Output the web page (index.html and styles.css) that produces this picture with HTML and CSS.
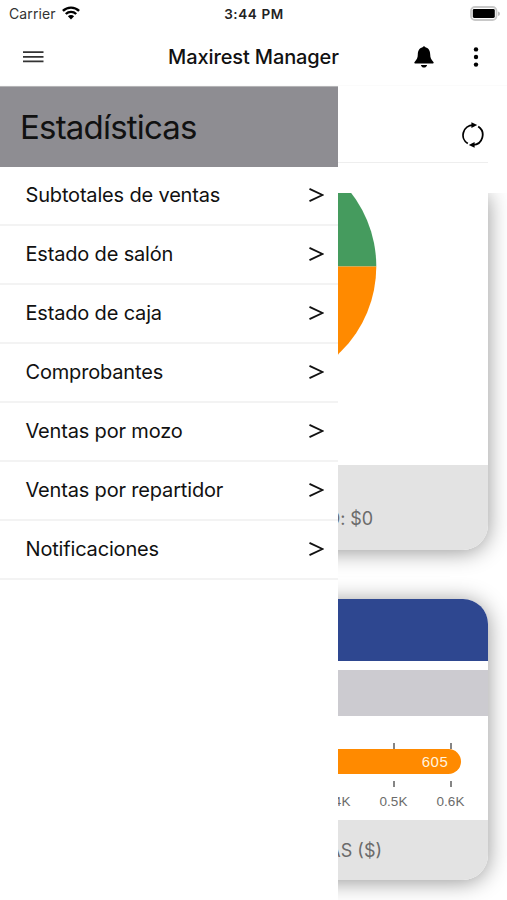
FILE: index.html
```html
<!DOCTYPE html>
<html lang="es">
<head>
<meta charset="utf-8">
<title>Maxirest Manager</title>
<link rel="stylesheet" href="styles.css">
</head>
<body>
<div class="status">
  <div class="carrier"><span>Carrier</span>
    <svg width="18" height="14" viewBox="0 0 18 14" fill="none" stroke="#000"><path d="M.9 4.9a11.6 11.6 0 0 1 16.2 0M3.8 8a7.4 7.4 0 0 1 10.4 0" stroke-width="2.4"/><path d="M9 13.4 5.9 10.3a4.4 4.4 0 0 1 6.2 0z" fill="#000" stroke="none"/></svg>
  </div>
  <div class="time">3:44 PM</div>
  <svg class="battery" width="30" height="16" viewBox="0 0 30 16"><rect x="1" y="1" width="25.5" height="13" rx="4" fill="#fff" stroke="#c8c8c8" stroke-width="1.8"/><rect x="2.8" y="3" width="22" height="9" rx="1.4"/><path d="M28 5.500q2 .5 2 2.300t-2 2.300z" fill="#bbb"/></svg>
</div>
<header class="navbar">
  <svg class="menu" width="21" height="12" viewBox="0 0 21 12" stroke="#333" stroke-width="1.8"><path d="M0 1.2h20.5M0 5.8h20.5M0 10.4h20.5"/></svg>
  <h1>Maxirest Manager</h1>
  <div class="actions">
    <svg width="20" height="22" viewBox="0 0 20 22"><path d="M8.6 1.200Q10-.6 11.400 1.200C15 2.100 16.100 5 16.200 8.500c.1 3.300.9 5 3 7.200.9 1 .5 1.900-.7 1.900H1.500c-1.200 0-1.600-.9-.7-1.900 2.100-2.200 2.900-3.900 3-7.200C3.900 5 5 2.100 8.600 1.200zM6.900 18.900h6.200c-.3 1.500-1.400 2.600-3.100 2.600s-2.800-1.100-3.100-2.600z"/></svg>
    <svg width="6" height="22" viewBox="0 0 6 22"><circle cx="3" cy="3.400" r="2.200"/><circle cx="3" cy="11" r="2.200"/><circle cx="3" cy="18.600" r="2.200"/></svg>
  </div>
</header>
<main>
  <nav class="drawer">
    <h2><span>Estadísticas</span></h2>
    <ul>
      <li><span>Subtotales de ventas</span><svg class="chev" viewBox="0 0 15 14"><path d="M.5.9 13.500 7 .5 13.100"/></svg></li>
      <li><span>Estado de salón</span><svg class="chev" viewBox="0 0 15 14"><path d="M.5.9 13.500 7 .5 13.100"/></svg></li>
      <li><span>Estado de caja</span><svg class="chev" viewBox="0 0 15 14"><path d="M.5.9 13.500 7 .5 13.100"/></svg></li>
      <li><span>Comprobantes</span><svg class="chev" viewBox="0 0 15 14"><path d="M.5.9 13.500 7 .5 13.100"/></svg></li>
      <li><span>Ventas por mozo</span><svg class="chev" viewBox="0 0 15 14"><path d="M.5.9 13.500 7 .5 13.100"/></svg></li>
      <li><span>Ventas por repartidor</span><svg class="chev" viewBox="0 0 15 14"><path d="M.5.9 13.500 7 .5 13.100"/></svg></li>
      <li><span>Notificaciones</span><svg class="chev" viewBox="0 0 15 14"><path d="M.5.9 13.500 7 .5 13.100"/></svg></li>
    </ul>
  </nav>
  <section class="content">
    <div class="toolbar">
      <svg width="24" height="26" viewBox="0 0 24 26" fill="none" stroke="#000" stroke-width="1.800"><path d="M6.800 21.600A10 10 0 0 1 12 3.100M17.200 4.600A10 10 0 0 1 12 22.900"/><path d="M10.400.2v5.800l5.800-2.900zM13.600 20v5.800l-5.800-2.900z" fill="#000" stroke="none"/></svg>
    </div>
    <div class="scroll">
      <article class="card first">
        <div class="pie"><svg width="150" height="272" viewBox="338 193 150 272"><path d="M256.300 266.500V146.500a120 120 0 0 1 120 120z" fill="#459b5e"/><path d="M256.300 266.500h120a120 120 0 0 1-120 120z" fill="#ff8a00"/></svg></div>
        <footer><span>TOTAL ESTIMADO: $0</span></footer>
      </article>
      <article class="card second">
        <div class="blue"></div>
        <div class="gray"></div>
        <div class="chart">
          <div class="ticks"><i></i><i></i></div>
          <div class="bar">605</div>
          <div class="ticks low"><i></i><i></i></div>
          <div class="labels"><span>0.4K</span><span>0.5K</span><span>0.6K</span></div>
        </div>
        <footer><span>VENTAS ($)</span></footer>
      </article>
    </div>
  </section>
</main>
</body>
</html>
```
FILE: styles.css
```css
* { box-sizing: border-box; margin: 0; padding: 0; }
body { width: 507px; height: 900px; overflow: hidden; background: #fff; color: #111; font-family: Inter, "Liberation Sans", sans-serif; }
svg { display: block; flex: none; }
span { white-space: nowrap; }
.status { display: grid; grid-template-columns: 1fr auto 1fr; height: 28px; padding: 0 7px 0 9px; align-items: center; }
.carrier { display: flex; align-items: center; gap: 6px; font-size: 14px; letter-spacing: .1px; color: #333; }
.carrier span { margin-top: -1px; }
.carrier svg { margin-top: -3px; }
.time { font-size: 13.500px; font-weight: 600; color: #222; letter-spacing: .6px; margin-right: 1px; }
.battery { justify-self: end; margin-top: -1px; }
.navbar { display: grid; grid-template-columns: 1fr auto 1fr; height: 58px; padding: 0 28px 0 23px; align-items: center; border-bottom: 1px solid #fbfbfb; }
h1 { font-size: 20px; font-weight: 500; letter-spacing: -.12px; margin: 1px -2.500px 0 2.500px; }
.menu { margin-top: 1px; }
.actions { display: flex; justify-content: flex-end; gap: 39px; }
main { display: flex; height: 814px; }
.drawer { width: 338px; flex: none; background: #fff; position: relative; z-index: 1; }
h2 { height: 80.500px; padding-left: 20px; background: #8e8d92; display: flex; align-items: center; font-size: 33px; font-weight: 400; letter-spacing: -.8px; border-top: 1px solid #b4b4b6; }
ul { list-style: none; }
li { height: 59.040px; padding: 0 14px 0 25.500px; display: flex; align-items: center; justify-content: space-between; border-bottom: 2px solid #f3f3f3; font-size: 20px; letter-spacing: -.17px; }
.chev { width: 15px; height: 14px; fill: none; stroke: #111; stroke-width: 1.900; }
.content { width: 169px; display: flex; flex-direction: column; }
.toolbar { height: 77px; width: 150px; border-bottom: 1px solid #eee; display: flex; justify-content: flex-end; align-items: center; padding: 22px 3px 0 0; }
.scroll { margin: 30px 0 0 -338px; padding-left: 149px; flex: 1; overflow: hidden; }
.card { width: 339px; background: #fff; box-shadow: 0 2px 22px rgba(0, 0, 0, .42); overflow: hidden; color: #6b6b6b; font-size: 18px; }
.first { height: 357px; border-radius: 0 0 25px 25px; }
.second { height: 281px; margin-top: 49px; border-radius: 25px; }
.pie { padding-left: 189px; }
.card footer { background: #e3e3e3; display: flex; justify-content: flex-end; }
.first footer { height: 85px; padding: 43px 115px 0 0; }
.first footer span { letter-spacing: -.1px; }
.second footer { height: 60px; padding: 1px 106px 0 0; align-items: center; }
.blue { height: 61.500px; background: #2e4790; }
.gray { height: 46px; margin-top: 9.500px; background: #cccbd0; }
.chart { height: 104px; padding: 27px 0 0 189px; font-family: "Liberation Sans", Arial, sans-serif; }
.ticks { display: flex; height: 6px; padding-left: 55px; gap: 55px; }
.ticks i { width: 2px; background: #858585; }
.low { margin-top: 7px; }
.bar { width: 123px; height: 25px; border-radius: 0 13px 13px 0; background: #ff8a00; color: #fff3df; font-size: 15px; letter-spacing: .6px; line-height: 25px; text-align: right; padding-right: 12.500px; }
.labels { display: grid; grid-template-columns: repeat(3, 57px); margin: 7px 0 0 -30px; font-size: 13.500px; letter-spacing: .1px; text-align: center; }
```
